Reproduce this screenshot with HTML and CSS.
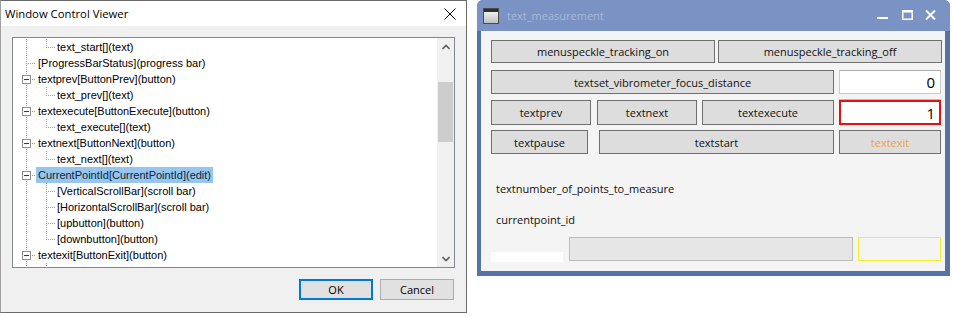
FILE: index.html
```html
<!DOCTYPE html>
<html>
<head>
<meta charset="utf-8">
<link rel="stylesheet" href="styles.css">
</head>
<body>
<div class="screen">
  <div class="dlg">
    <div class="dlg-title">
      <span class="dlg-caption">Window Control Viewer</span>
      <svg class="dlg-close" width="12" height="12" viewBox="0 0 12 12"><path d="M0.5 0.5L11.5 11.5M11.5 0.5L0.5 11.5" stroke="#000" stroke-width="1" fill="none"/></svg>
    </div>
    <div class="dlg-body">
      <div class="tree">
        <div class="tree-rows">
          <div class="row"><span class="ca"></span><span class="cb last"></span><span class="lbl">text_start[](text)</span></div>
          <div class="row"><span class="ca leaf"></span><span class="lbl">[ProgressBarStatus](progress bar)</span></div>
          <div class="row"><span class="ca node"><span class="pm"><i></i></span></span><span class="lbl">textprev[ButtonPrev](button)</span></div>
          <div class="row"><span class="ca"></span><span class="cb last"></span><span class="lbl">text_prev[](text)</span></div>
          <div class="row"><span class="ca node"><span class="pm"><i></i></span></span><span class="lbl">textexecute[ButtonExecute](button)</span></div>
          <div class="row"><span class="ca"></span><span class="cb last"></span><span class="lbl">text_execute[](text)</span></div>
          <div class="row"><span class="ca node"><span class="pm"><i></i></span></span><span class="lbl">textnext[ButtonNext](button)</span></div>
          <div class="row"><span class="ca"></span><span class="cb last"></span><span class="lbl">text_next[](text)</span></div>
          <div class="row"><span class="ca node"><span class="pm"><i></i></span></span><span class="lbl sel">CurrentPointId[CurrentPointId](edit)</span></div>
          <div class="row"><span class="ca"></span><span class="cb mid"></span><span class="lbl">[VerticalScrollBar](scroll bar)</span></div>
          <div class="row"><span class="ca"></span><span class="cb mid"></span><span class="lbl">[HorizontalScrollBar](scroll bar)</span></div>
          <div class="row"><span class="ca"></span><span class="cb mid"></span><span class="lbl">[upbutton](button)</span></div>
          <div class="row"><span class="ca"></span><span class="cb last"></span><span class="lbl">[downbutton](button)</span></div>
          <div class="row"><span class="ca node"><span class="pm"><i></i></span></span><span class="lbl">textexit[ButtonExit](button)</span></div>
          <div class="row"><span class="ca"></span><span class="cb last"></span><span class="lbl">text_exit[](text)</span></div>
        </div>
        <div class="vscroll">
          <div class="sb-btn"><svg width="8" height="6" viewBox="0 0 8 6"><path d="M0.5 5L4 1.5L7.5 5" stroke="#606060" stroke-width="1.6" fill="none"/></svg></div>
          <div class="sb-track"><div class="sb-thumb"></div></div>
          <div class="sb-btn"><svg width="8" height="6" viewBox="0 0 8 6"><path d="M0.5 1L4 4.5L7.5 1" stroke="#606060" stroke-width="1.6" fill="none"/></svg></div>
        </div>
      </div>
      <div class="dlg-btns">
        <div class="btn ok">OK</div>
        <div class="btn">Cancel</div>
      </div>
    </div>
  </div>

  <div class="win">
    <div class="win-title">
      <svg class="win-icon" width="16" height="16" viewBox="0 0 16 16">
        <defs><linearGradient id="ig" x1="0" y1="0" x2="0" y2="1"><stop offset="0" stop-color="#ffffff"/><stop offset="1" stop-color="#bdbdbd"/></linearGradient></defs>
        <rect x="0.5" y="0.5" width="15" height="15" fill="url(#ig)" stroke="#4a4a4a"/>
        <rect x="1" y="1" width="14" height="3" fill="#2f2f2f"/>
      </svg>
      <span class="win-caption">text_measurement</span>
      <svg class="ctl-min" width="11" height="10" viewBox="0 0 11 10"><rect x="0" y="7" width="11" height="2" fill="#fff"/></svg>
      <svg class="ctl-max" width="11" height="10" viewBox="0 0 11 10"><rect x="0.75" y="0.75" width="9.5" height="8.5" fill="none" stroke="#fff" stroke-width="1.5"/><rect x="0" y="0" width="11" height="2.5" fill="#fff"/></svg>
      <svg class="ctl-close" width="11" height="10" viewBox="0 0 11 10"><path d="M1 0.5L10 9.5M10 0.5L1 9.5" stroke="#fff" stroke-width="2" fill="none"/></svg>
    </div>
    <div class="win-frame">
      <div class="win-body">
        <div class="r r1">
          <div class="b w224">menuspeckle_tracking_on</div>
          <div class="b w224">menuspeckle_tracking_off</div>
        </div>
        <div class="r r2">
          <div class="b w343">textset_vibrometer_focus_distance</div>
          <div class="inp">0</div>
        </div>
        <div class="r r3">
          <div class="b w100">textprev</div>
          <div class="b w100 ml6">textnext</div>
          <div class="b w132 ml5">textexecute</div>
          <div class="inp focus ml5">1</div>
        </div>
        <div class="r r4">
          <div class="b w97">textpause</div>
          <div class="b w235 ml11">textstart</div>
          <div class="b w102 ml5 exit">textexit</div>
        </div>
        <div class="lab lab1">textnumber_of_points_to_measure</div>
        <div class="lab lab2">currentpoint_id</div>
        <div class="r5">
          <div class="white-bar"></div>
          <div class="prog"></div>
          <div class="yel"></div>
        </div>
      </div>
    </div>
  </div>
</div>
</body>
</html>
```

FILE: styles.css
```css
* { box-sizing: border-box; }

body {
  margin: 0;
  background: #ffffff;
  width: 953px;
  height: 317px;
  overflow: hidden;
}

.screen {
  display: flex;
  align-items: flex-start;
  gap: 10px;
}

/* ---------- left dialog ---------- */
.dlg {
  width: 467px;
  height: 313px;
  border: 1px solid #6b6b6b;
  border-left-color: #a0a0a0;
  background: #f0f0f0;
  display: flex;
  flex-direction: column;
  font-family: "Open Sans", "Noto Sans", sans-serif;
  font-size: 11px;
  color: #000;
}

.dlg-title {
  height: 25px;
  flex: none;
  background: #ffffff;
  display: flex;
  align-items: center;
  justify-content: space-between;
  padding: 0 10px 0 4px;
}

.dlg-caption {
  font-size: 11.3px;
}

.dlg-close { flex: none; }

.dlg-body {
  flex: 1;
  padding: 11px 11px 0 11px;
  display: flex;
  flex-direction: column;
}

.tree {
  height: 231px;
  flex: none;
  border: 1px solid #828790;
  background: #ffffff;
  display: flex;
}

.tree-rows {
  flex: 1;
  padding-top: 1px;
  overflow: hidden;
  font-family: "Liberation Sans", Arial, sans-serif;
  font-size: 11px;
  color: #000;
}

.row {
  display: flex;
  height: 16px;
}

.ca {
  width: 23px;
  flex: none;
  display: flex;
  background: repeating-linear-gradient(to bottom, #a0a0a0 0 1px, transparent 1px 2px) 13px 0 / 1px 16px no-repeat;
}

.ca.leaf {
  background:
    repeating-linear-gradient(to right, #a0a0a0 0 1px, transparent 1px 2px) 15px 8px / 8px 1px no-repeat,
    repeating-linear-gradient(to bottom, #a0a0a0 0 1px, transparent 1px 2px) 13px 0 / 1px 16px no-repeat;
}

.ca.node {
  background:
    repeating-linear-gradient(to right, #a0a0a0 0 1px, transparent 1px 2px) 19px 8px / 4px 1px no-repeat,
    repeating-linear-gradient(to bottom, #a0a0a0 0 1px, transparent 1px 2px) 13px 0 / 1px 16px no-repeat;
}

.pm {
  width: 9px;
  height: 9px;
  margin: 4px 0 0 9px;
  border: 1px solid #8f8f8f;
  background: #ffffff;
  display: flex;
  align-items: center;
  justify-content: center;
}

.pm i {
  width: 5px;
  height: 1px;
  background: #3a3a3a;
}

.cb {
  width: 19px;
  flex: none;
}

.cb.mid {
  background:
    repeating-linear-gradient(to right, #a0a0a0 0 1px, transparent 1px 2px) 12px 8px / 7px 1px no-repeat,
    repeating-linear-gradient(to bottom, #a0a0a0 0 1px, transparent 1px 2px) 10px 0 / 1px 16px no-repeat;
}

.cb.last {
  background:
    repeating-linear-gradient(to right, #a0a0a0 0 1px, transparent 1px 2px) 12px 8px / 7px 1px no-repeat,
    repeating-linear-gradient(to bottom, #a0a0a0 0 1px, transparent 1px 2px) 10px 0 / 1px 9px no-repeat;
}

.lbl {
  padding: 0 2px;
  line-height: 16px;
  white-space: nowrap;
}

.lbl.sel {
  background: #96c6ee;
  color: #0e2440;
}

.vscroll {
  width: 17px;
  flex: none;
  background: #f0f0f0;
  display: flex;
  flex-direction: column;
}

.sb-btn {
  height: 17px;
  flex: none;
  display: flex;
  align-items: center;
  justify-content: center;
}

.sb-track { flex: 1; }

.sb-thumb {
  margin: 27px 1px 0 1px;
  height: 60px;
  background: #cdcdcd;
}

.dlg-btns {
  display: flex;
  justify-content: flex-end;
  gap: 7px;
  margin-top: 11px;
  padding-right: 1px;
}

.btn {
  width: 74px;
  height: 21px;
  background: #e1e1e1;
  border: 1px solid #adadad;
  display: flex;
  align-items: center;
  justify-content: center;
  font-size: 11px;
}

.btn.ok {
  border: 2px solid #0078d7;
}

/* ---------- right window ---------- */
.win {
  width: 473px;
  height: 276px;
  background: #5673a8;
  border-radius: 6px 6px 0 0;
  display: flex;
  flex-direction: column;
  overflow: hidden;
  font-family: "Open Sans", "Noto Sans", sans-serif;
  font-size: 11px;
  color: #111;
}

.win-title {
  height: 31px;
  flex: none;
  background: #7a93c4;
  display: flex;
  align-items: center;
  padding: 0 14px 0 6px;
}

.win-icon { flex: none; }

.win-caption {
  flex: 1;
  margin-left: 8px;
  color: #a9b8d8;
  font-size: 11px;
}

.ctl-min, .ctl-max, .ctl-close {
  flex: none;
  margin-bottom: 2px;
}

.ctl-max { margin-left: 14px; }
.ctl-close { margin-left: 12px; }

.win-frame {
  flex: 1;
  padding: 0 5px 5px 4px;
  display: flex;
}

.win-body {
  flex: 1;
  background: #f4f4f4;
  padding: 9px 0 0 10px;
  display: flex;
  flex-direction: column;
}

.r { display: flex; flex: none; }
.r1 { height: 23px; gap: 3px; margin-bottom: 7px; }
.r2 { height: 24px; gap: 5px; margin-bottom: 6px; }
.r3 { height: 25px; margin-bottom: 5px; }
.r4 { height: 24px; }

.b {
  flex: none;
  background: #dddddd;
  border: 1px solid #707070;
  display: flex;
  align-items: center;
  justify-content: center;
  white-space: nowrap;
}

.w224 { width: 224px; }
.w343 { width: 343px; }
.w100 { width: 100px; }
.w132 { width: 132px; }
.w97 { width: 97px; }
.w235 { width: 235px; }
.w102 { width: 102px; }
.ml5 { margin-left: 5px; }
.ml6 { margin-left: 6px; }
.ml11 { margin-left: 11px; }

.exit { color: #f2a33a; }

.inp {
  width: 102px;
  flex: none;
  background: #ffffff;
  border: 1px solid #cacaca;
  border-top-color: #adadad;
  display: flex;
  align-items: center;
  justify-content: flex-end;
  padding-right: 5px;
  font-size: 15px;
  color: #000;
}

.inp.focus {
  border: 2px solid #e31212;
  padding-right: 4px;
  box-shadow: 0 -1px 0 #bdbdbd;
}

.lab {
  padding-left: 5px;
  line-height: 16px;
  color: #111;
  flex: none;
}

.lab1 { margin-top: 27px; }
.lab2 { margin-top: 15px; }

.r5 {
  display: flex;
  align-items: flex-start;
  margin-top: 9px;
}

.white-bar {
  width: 72px;
  height: 10px;
  margin-top: 15px;
  background: #ffffff;
}

.prog {
  width: 284px;
  height: 24px;
  margin-left: 6px;
  background: #e6e6e6;
  border: 1px solid #bcbcbc;
}

.yel {
  width: 83px;
  height: 24px;
  margin-left: 5px;
  border: 1px solid #f4ee2a;
}
```
